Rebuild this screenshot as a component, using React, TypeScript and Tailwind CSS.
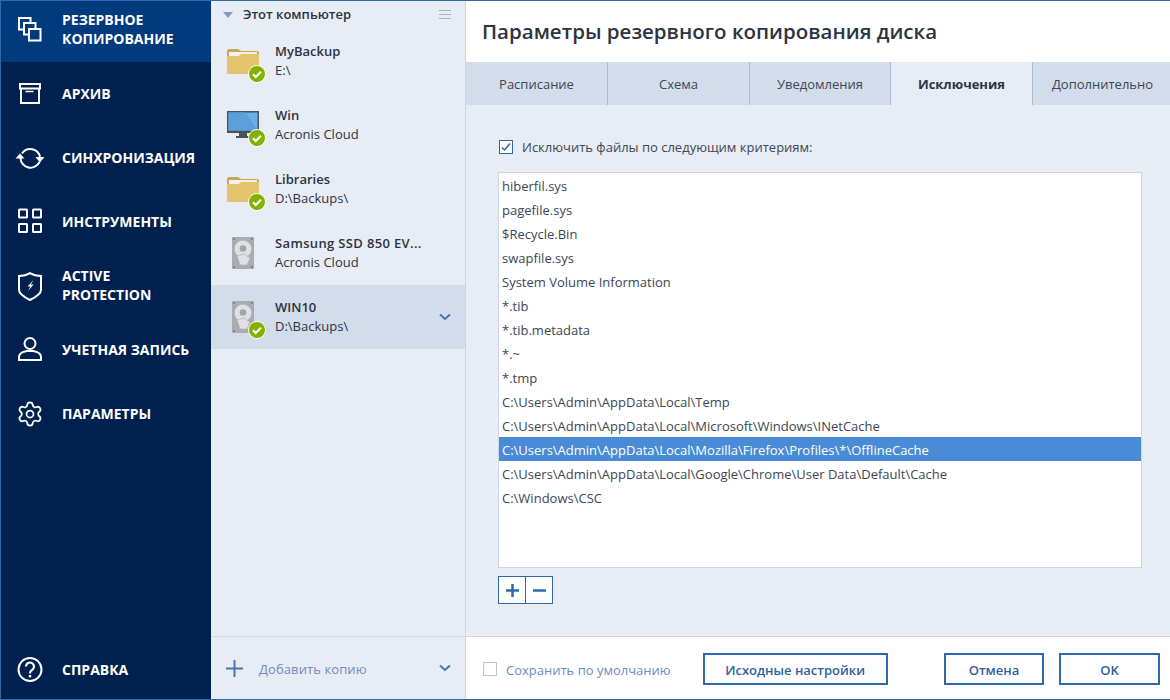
import React from "react";
import { Settings } from "lucide-react";

const font = { fontFamily: '"Open Sans", "Noto Sans", sans-serif' };

function NavIcon({ name }: { name: string }) {
  const c = { fill: "none", stroke: "#fff", strokeWidth: 2 } as const;
  if (name === "gear") {
    return (
      <div className="w-7 h-7 shrink-0">
        <Settings size={28} color="#fff" strokeWidth={1.5} className="-ml-[2px]" />
      </div>
    );
  }
  return (
    <svg width="28" height="28" viewBox="0 0 28 28" className="shrink-0 overflow-visible">
      {name === "backup" && (
        <g {...c}>
          <rect x="1" y="2" width="11.500" height="11.500" />
          <rect x="6" y="7" width="11.500" height="11.500" fill="#023a7e" />
          <rect x="11" y="13" width="11.500" height="11.500" fill="#023a7e" />
        </g>
      )}
      {name === "archive" && (
        <g {...c}>
          <rect x="2" y="4" width="20" height="4.500" />
          <path d="M3 8.500V23h18V8.500" />
          <path d="M7.500 11.500h8" strokeWidth="1.500" />
        </g>
      )}
      {name === "sync" && (
        <g>
          <path d="M4 9.500A10 10 0 0 1 22 13" {...c} />
          <path d="M2.500 14A10 10 0 0 0 21.500 18" {...c} />
          <path d="M2 9.500l-4.500 5h9z" fill="#fff" />
          <path d="M22 18.500l-4.500-5.500h9z" fill="#fff" />
        </g>
      )}
      {name === "tools" && (
        <g {...c}>
          <rect x="1" y="1.500" width="8" height="8" rx="0.500" />
          <rect x="15" y="1.500" width="8" height="8" rx="0.500" />
          <rect x="1" y="16" width="8" height="8" rx="0.500" />
          <rect x="15" y="16" width="8" height="8" rx="0.500" />
        </g>
      )}
      {name === "shield" && (
        <g>
          <path d="M12 1.200C15 3 19 4 23 4v14c0 4-7 8-11 10C8 26 1 22 1 18V4C5 4 9 3 12 1.200z" {...c} />
          <path d="M15.500 8l-6 6.500h2.800L10 19l5.500-6.500h-2.700z" fill="#fff" />
        </g>
      )}
      {name === "user" && (
        <g {...c}>
          <circle cx="12" cy="7.500" r="5.500" />
          <path d="M1 24v-3c0-4 5-5.500 8-6h6c3 .5 8 2 8 6v3z" />
        </g>
      )}
      {name === "help" && (
        <g>
          <circle cx="12" cy="13.500" r="11.500" {...c} />
          <path d="M8 10.500a4 4 0 1 1 6 3.500c-1.300.8-2 1.500-2 3.500" {...c} strokeWidth="2.200" />
          <rect x="10.800" y="19" width="2.400" height="2.400" fill="#fff" />
        </g>
      )}
    </svg>
  );
}

function NavItem({ icon, lines, rowClass = "h-16" }: { icon: string; lines: string[]; rowClass?: string }) {
  return (
    <div className={`${rowClass} flex items-center pl-[17px] gap-[16px]`}>
      <NavIcon name={icon} />
      <div className="text-white font-bold text-[14px] leading-[19px] whitespace-nowrap pb-[2px]">
        {lines.map((l) => (
          <div key={l}>{l}</div>
        ))}
      </div>
    </div>
  );
}

function Check() {
  return (
    <svg width="20" height="20" viewBox="0 0 20 20" className="absolute left-[36px] top-[35px]">
      <circle cx="10" cy="10" r="9" fill="#fff" fillOpacity="0.9" />
      <circle cx="10" cy="10" r="8" fill="#84b000" />
      <path d="M6 10.200l2.800 2.800 5.200-5.200" fill="none" stroke="#fff" strokeWidth="2.200" />
    </svg>
  );
}

function Folder() {
  return (
    <svg width="32" height="26" viewBox="0 0 32 26">
      <path d="M0 3a2 2 0 0 1 2-2h9l3 2h16a2 2 0 0 1 2 2v6H0z" fill="#c9a35a" />
      <rect x="2" y="4" width="28" height="8" fill="#f3f1ea" />
      <path d="M0 8h12l2-2h18v18.500a1.500 1.500 0 0 1-1.500 1.500h-29A1.500 1.500 0 0 1 0 24.500z" fill="#e5c26e" />
    </svg>
  );
}

function Monitor() {
  return (
    <svg width="32" height="28" viewBox="0 0 32 28">
      <rect x="0" y="0" width="32" height="22" fill="#4d5054" />
      <rect x="1.500" y="1.500" width="29" height="18" fill="#6ab0e6" />
      <path d="M1.500 1.500h17l12 18h-29z" fill="#5ba0da" />
      <rect x="12" y="22" width="8" height="3" fill="#4d5054" />
      <rect x="9" y="25" width="14" height="2" fill="#4d5054" />
    </svg>
  );
}

function Disk() {
  return (
    <svg width="22" height="32" viewBox="0 0 22 32">
      <rect width="22" height="32" rx="1" fill="#a9acb0" />
      <circle cx="2" cy="2" r="0.900" fill="#6f7276" />
      <circle cx="20" cy="2" r="0.900" fill="#6f7276" />
      <circle cx="2" cy="30" r="0.900" fill="#6f7276" />
      <circle cx="20" cy="30" r="0.900" fill="#6f7276" />
      <circle cx="11" cy="12" r="8.500" fill="#dfe1e4" />
      <circle cx="11" cy="11.500" r="3.300" fill="#a2a6aa" />
      <path d="M12 17l6 4-3 7H8l-2-6-1-3z" fill="#dfe1e4" stroke="#b4b7bb" strokeWidth="0.800" />
    </svg>
  );
}

function BackupRow({
  title,
  sub,
  icon,
  check = true,
  selected,
  titleClass = "",
}: {
  title: string;
  sub: string;
  icon: string;
  check?: boolean;
  selected?: boolean;
  titleClass?: string;
}) {
  return (
    <div className={`h-16 flex items-center relative ${selected ? "bg-[#d2dcea]" : ""}`}>
      <div className="w-[64px] pl-[16px] shrink-0 flex">
        <div className={`h-8 flex items-center ${icon === "disk" ? "ml-[5px]" : ""}`}>
          {icon === "folder" && <Folder />}
          {icon === "monitor" && <Monitor />}
          {icon === "disk" && <Disk />}
        </div>
      </div>
      {check && <Check />}
      <div className="text-[13px] leading-[19px] text-[#2b3440] whitespace-nowrap">
        <div className={`font-semibold ${titleClass}`}>{title}</div>
        <div>{sub}</div>
      </div>
      {selected && (
        <svg width="12" height="8" viewBox="0 0 12 8" className="absolute right-[14px] top-[28px]">
          <path d="M1 1.500l5 4.500 5-4.500" fill="none" stroke="#4b74b4" strokeWidth="2" />
        </svg>
      )}
    </div>
  );
}

const tabs = ["Расписание", "Схема", "Уведомления", "Исключения", "Дополнительно"];
const tabW = ["w-[142px]", "w-[142px]", "w-[141px]", "w-[142px]", "flex-1"];
const files = [
  "hiberfil.sys",
  "pagefile.sys",
  "$Recycle.Bin",
  "swapfile.sys",
  "System Volume Information",
  "*.tib",
  "*.tib.metadata",
  "*.~",
  "*.tmp",
  "C:\\Users\\Admin\\AppData\\Local\\Temp",
  "C:\\Users\\Admin\\AppData\\Local\\Microsoft\\Windows\\INetCache",
  "C:\\Users\\Admin\\AppData\\Local\\Mozilla\\Firefox\\Profiles\\*\\OfflineCache",
  "C:\\Users\\Admin\\AppData\\Local\\Google\\Chrome\\User Data\\Default\\Cache",
  "C:\\Windows\\CSC",
];

function FootButton({ children, w }: { children: string; w: string }) {
  return (
    <div className={`${w} h-8 border-[2px] border-[#2f68ad] flex items-center justify-center pt-[3px] text-[13px] font-semibold text-[#2f5f9e]`}>
      {children}
    </div>
  );
}

export default function App() {
  return (
    <div style={font} className="w-[1170px] h-[700px] flex border border-[#2f68ad] border-r-0 overflow-hidden bg-white">
      <aside className="w-[210px] shrink-0 bg-[#00214f] flex flex-col">
        <div className="h-[61px] bg-[#023a7e] pb-[3px] flex flex-col justify-center">
          <NavItem icon="backup" lines={["РЕЗЕРВНОЕ", "КОПИРОВАНИЕ"]} rowClass="h-[58px]" />
        </div>
        <NavItem icon="archive" lines={["АРХИВ"]} />
        <NavItem icon="sync" lines={["СИНХРОНИЗАЦИЯ"]} />
        <NavItem icon="tools" lines={["ИНСТРУМЕНТЫ"]} />
        <NavItem icon="shield" lines={["ACTIVE", "PROTECTION"]} />
        <NavItem icon="user" lines={["УЧЕТНАЯ ЗАПИСЬ"]} />
        <NavItem icon="gear" lines={["ПАРАМЕТРЫ"]} />
        <div className="mt-auto">
          <NavItem icon="help" lines={["СПРАВКА"]} rowClass="h-[58px]" />
        </div>
      </aside>

      <section className="w-[255px] shrink-0 bg-[#e8ecf5] border-r border-[#ccd6e6] flex flex-col">
        <div className="h-[28px] flex items-center pl-[12px] pr-[14px] shrink-0">
          <svg width="10" height="6" viewBox="0 0 10 6" className="mr-[10px]">
            <path d="M0 0h10L5 6z" fill="#7d9cca" />
          </svg>
          <span className="text-[13px] font-semibold text-[#2b3440]">Этот компьютер</span>
          <svg width="12" height="10" viewBox="0 0 12 10" className="ml-auto">
            <path d="M0 .5h12M0 4.500h12M0 8.500h12" stroke="#a3b3cc" strokeWidth="1" />
          </svg>
        </div>
        <BackupRow title="MyBackup" sub="E:\" icon="folder" />
        <BackupRow title="Win" sub="Acronis Cloud" icon="monitor" />
        <BackupRow title="Libraries" sub="D:\Backups\" icon="folder" />
        <BackupRow title="Samsung SSD 850 EV..." sub="Acronis Cloud" icon="disk" check={false} titleClass="tracking-[0.35px]" />
        <BackupRow title="WIN10" sub="D:\Backups\" icon="disk" selected />
        <div className="mt-auto h-[63px] border-t border-[#ccd6e6] flex items-center pl-[15px] pr-[14px]">
          <svg width="17" height="17" viewBox="0 0 17 17" className="mr-[16px]">
            <path d="M8.500 0v17M0 8.500h17" stroke="#4b74b4" strokeWidth="2" />
          </svg>
          <span className="text-[13px] text-[#6d8cc0] pt-[4px] tracking-[0.1px]">Добавить копию</span>
          <svg width="12" height="8" viewBox="0 0 12 8" className="ml-auto">
            <path d="M1 1.500l5 4.500 5-4.500" fill="none" stroke="#4b74b4" strokeWidth="2" />
          </svg>
        </div>
      </section>

      <main className="flex-1 min-w-0 flex flex-col">
        <div className="h-[61px] shrink-0 flex items-center pl-[16px] text-[20.500px] font-semibold text-[#2b3440] whitespace-nowrap">
          Параметры резервного копирования диска
        </div>
        <div className="h-[43px] shrink-0 flex bg-[#d2dcea]">
          {tabs.map((t, i) => (
            <div
              key={t}
              className={`${tabW[i]} flex items-center justify-center text-[13px] whitespace-nowrap border-r border-[#a9bad3] last:border-r-0 last:pl-[2px] ${
                i === 3 ? "bg-[#e8ecf5] font-bold text-[#2b3440] pt-[3px]" : "text-[#3c4654] pt-[2px]"
              }`}
            >
              {t}
            </div>
          ))}
        </div>
        <div className="flex-1 bg-[#e8ecf5] pt-[35px] pl-[32px] pr-[28px] min-h-0">
          <div className="flex items-center h-[14px] ml-[1px] gap-[9px] text-[13px] text-[#3c4654]">
            <div className="w-[14px] h-[14px] bg-white border border-[#2f68ad] flex items-center justify-center">
              <svg width="10" height="10" viewBox="0 0 10 10">
                <path d="M1 5.500l2.500 2.500L9 1.500" fill="none" stroke="#2f68ad" strokeWidth="1.500" />
              </svg>
            </div>
            <span className="pt-[2px]">Исключить файлы по следующим критериям:</span>
          </div>
          <div className="mt-[18px] h-[396px] bg-white border border-[#ccd6e6] text-[13px] text-[#3c4654]">
            {files.map((f, i) => (
              <div
                key={f}
                className={`h-6 leading-[26px] pl-[3px] whitespace-nowrap ${i === 11 ? "bg-[#4a8bd6] text-white" : ""}`}
              >
                {f}
              </div>
            ))}
          </div>
          <div className="mt-[8px] flex w-[55px] h-[28px] bg-white border border-[#2f68ad]">
            <div className="flex-1 border-r border-[#2f68ad] flex items-center justify-center">
              <svg width="13" height="13" viewBox="0 0 13 13">
                <path d="M6.500 0v13M0 6.500h13" stroke="#2f68ad" strokeWidth="2.500" />
              </svg>
            </div>
            <div className="flex-1 flex items-center justify-center">
              <svg width="13" height="13" viewBox="0 0 13 13">
                <path d="M0 6.500h13" stroke="#2f68ad" strokeWidth="2.500" />
              </svg>
            </div>
          </div>
        </div>
        <div className="h-[63px] shrink-0 border-t border-[#ccd6e6] bg-white flex items-center pt-[2px] pl-[17px] pr-[10px]">
          <div className="w-[14px] h-[14px] border border-[#b9c6da] mr-[9px]" />
          <span className="text-[13px] text-[#6d8cc0] pt-[3px]">Сохранить по умолчанию</span>
          <div className="ml-[32px]">
            <FootButton w="w-[185px]">Исходные настройки</FootButton>
          </div>
          <div className="ml-auto flex gap-[15px]">
            <FootButton w="w-[100px]">Отмена</FootButton>
            <FootButton w="w-[101px]">OK</FootButton>
          </div>
        </div>
      </main>
    </div>
  );
}
